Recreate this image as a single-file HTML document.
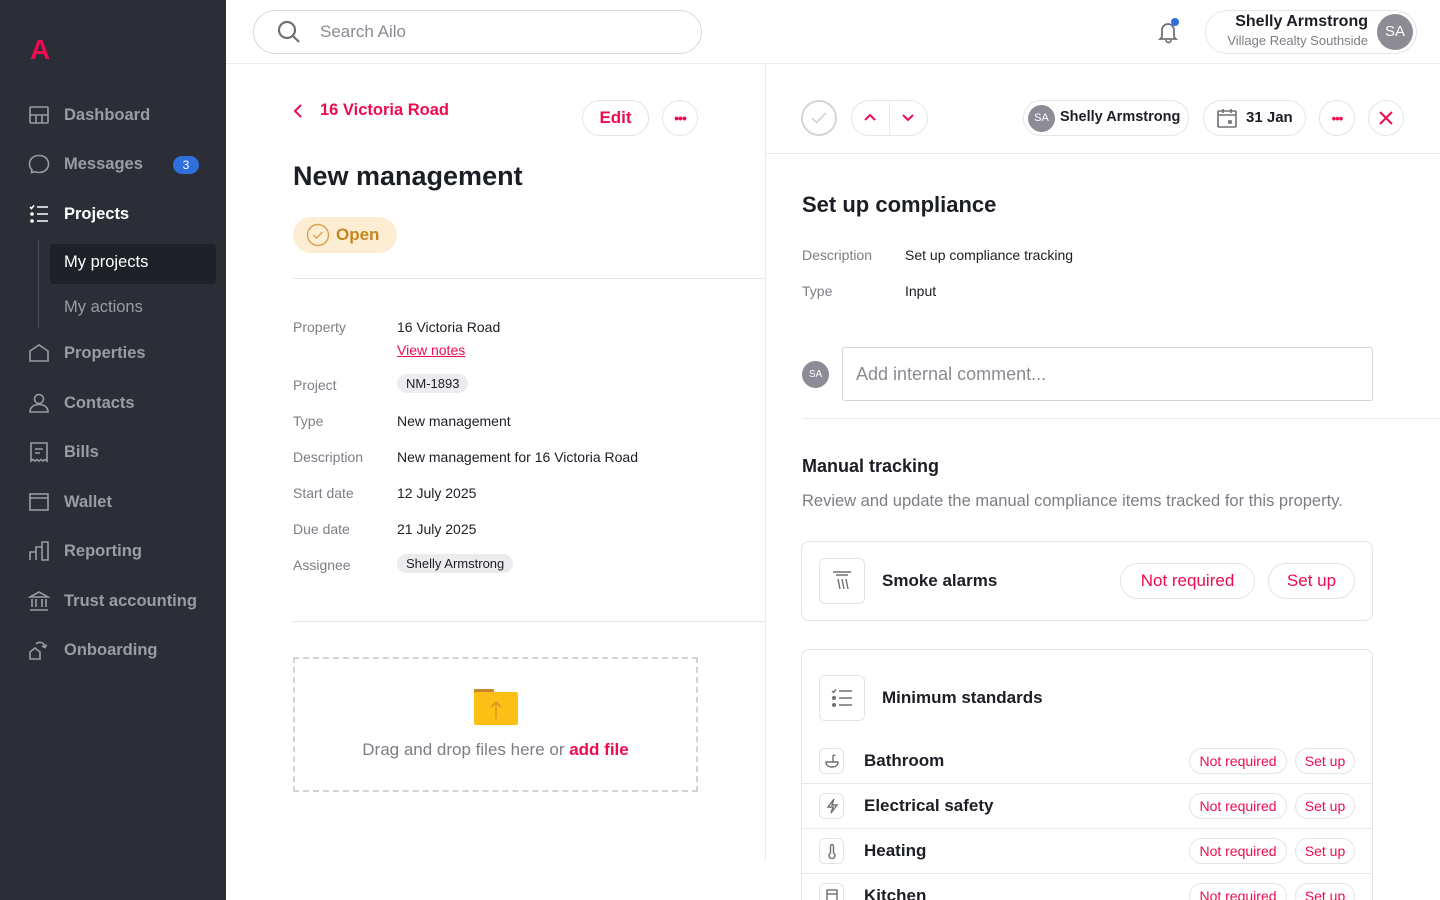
<!DOCTYPE html>
<html><head><meta charset="utf-8">
<style>
*{box-sizing:border-box;margin:0;padding:0}
html,body{width:1440px;height:900px;overflow:hidden}
body{background:#fff;font-family:"Liberation Sans",sans-serif;color:#1c1e26;position:relative}
.a{position:absolute}
.sb{left:0;top:0;width:226px;height:900px;background:#2b2e36}
.ni{position:absolute;left:28px;display:flex;align-items:center;color:#9a9ca3;font-size:16.5px;font-weight:bold}
.ni svg{width:22px;height:22px;margin-right:14px;fill:none;stroke:#9a9ca3;stroke-width:1.6}
.pill{position:absolute;border:1px solid #e6e6e8;border-radius:22px;background:#fff}
.lbl{position:absolute;left:293px;font-size:14px;color:#7c7e85}
.val{position:absolute;left:397px;font-size:14px;color:#1c1e26}
.red{color:#ee0b4f !important}
.tag{background:#ececee;border-radius:10px;padding:2px 9px;font-size:13px}
.btn{position:absolute;border:1px solid #e4e4e6;border-radius:20px;color:#ee0b4f;font-weight:bold;display:flex;align-items:center;justify-content:center;background:#fff}
.ico{position:absolute;border:1px solid #e4e4e6;border-radius:6px;display:flex;align-items:center;justify-content:center}
.ico svg{fill:none;stroke:#6e7077;stroke-width:1.4}
.row{position:absolute;left:1px;width:570px;height:45px;border-top:1px solid #e8e8ea}
</style></head><body>
<div class="a sb"></div>
<div class="a" style="left:30px;top:36px;font-size:28px;font-weight:bold;color:#ee0b4f;line-height:28px">A</div>

<div class="ni" style="top:104px"><svg viewBox="0 0 22 22"><rect x="2" y="3" width="18" height="16" rx="1"/><path d="M2 11h18M8 11v8M14 11v8"/></svg>Dashboard</div>
<div class="ni" style="top:153px"><svg viewBox="0 0 22 22"><path d="M4 17c-2-2-2.5-4-2.5-6 0-5 4-8.5 9.5-8.5s9.5 3.5 9.5 8.5-4 8.5-9.5 8.5c-1.5 0-3-.3-4-.8L3.5 19.5z"/></svg>Messages</div>
<div class="a" style="left:173px;top:156px;width:26px;height:18px;border-radius:9px;background:#2f6fdb;color:#fff;font-size:12px;text-align:center;line-height:18px">3</div>
<div class="ni" style="top:203px;color:#fff"><svg viewBox="0 0 22 22" style="stroke:#fff"><path d="M2 4l1.5 1.5L6 2.5M9 4h11M9 11h11M9 18h11"/><circle cx="4" cy="11" r="1" fill="#fff"/><circle cx="4" cy="18" r="1" fill="#fff"/></svg>Projects</div>
<div class="a" style="left:38px;top:240px;width:1px;height:88px;background:#4a4d55"></div>
<div class="a" style="left:50px;top:244px;width:166px;height:40px;background:#1f2128;border-radius:4px"></div>
<div class="ni" style="left:64px;top:253px;color:#fff;font-weight:normal">My projects</div>
<div class="ni" style="left:64px;top:298px;font-weight:normal">My actions</div>
<div class="ni" style="top:342px"><svg viewBox="0 0 22 22"><path d="M2 9l9-6 9 6v10H2z"/></svg>Properties</div>
<div class="ni" style="top:392px"><svg viewBox="0 0 22 22"><circle cx="11" cy="7" r="4.5"/><path d="M2 20c0-5 4-7.5 9-7.5s9 2.5 9 7.5z"/></svg>Contacts</div>
<div class="ni" style="top:441px"><svg viewBox="0 0 22 22"><path d="M3 2h16v18l-2-1.5-2 1.5-2-1.5-2 1.5-2-1.5-2 1.5-2-1.5-2 1.5zM7 8h8M7 12h5"/></svg>Bills</div>
<div class="ni" style="top:491px"><svg viewBox="0 0 22 22"><rect x="2" y="3" width="18" height="16"/><path d="M2 7h18"/></svg>Wallet</div>
<div class="ni" style="top:540px"><svg viewBox="0 0 22 22"><path d="M2 20V12h6v8M8 20V7h6v13M14 20V2h6v18z"/></svg>Reporting</div>
<div class="ni" style="top:590px"><svg viewBox="0 0 22 22"><path d="M2 7l9-5 9 5zM4 9v8M8 9v8M14 9v8M18 9v8M2 20h18"/></svg>Trust accounting</div>
<div class="ni" style="top:639px"><svg viewBox="0 0 22 22"><path d="M2 13l5-4 5 4v7H2zM8 5c3-3 8-2 9 3M14 7l3 1.5 1.5-3"/></svg>Onboarding</div>

<div class="a" style="left:226px;top:63px;width:1214px;height:1px;background:#ececee"></div>
<div class="pill" style="left:253px;top:10px;width:449px;height:44px;border-color:#d9d9dc"></div>
<svg class="a" style="left:276px;top:19px" width="26" height="26" viewBox="0 0 26 26" fill="none" stroke="#6e7077" stroke-width="2.2"><circle cx="11" cy="11" r="8"/><path d="M17 17l6 6"/></svg>
<div class="a" style="left:320px;top:22px;font-size:17px;color:#8a8c93">Search Ailo</div>
<svg class="a" style="left:1156px;top:18px" width="26" height="26" viewBox="0 0 26 26" fill="none" stroke="#6e7077" stroke-width="1.7"><path d="M6 19V12a6 6 0 0112 0v7l2 2H4zM10 22a2.5 2.5 0 005 0"/></svg>
<div class="a" style="left:1171px;top:18px;width:8px;height:8px;border-radius:4px;background:#2f6fdb"></div>
<div class="pill" style="left:1205px;top:10px;width:212px;height:44px"></div>
<div class="a" style="left:1212px;top:13px;width:156px;text-align:right;font-size:16px;font-weight:bold">Shelly Armstrong</div>
<div class="a" style="left:1212px;top:33px;width:156px;text-align:right;font-size:13px;color:#7c7e85">Village Realty Southside</div>
<div class="a" style="left:1377px;top:14px;width:36px;height:36px;border-radius:18px;background:#8d8c96;color:#fff;font-size:15px;text-align:center;line-height:36px">SA</div>

<div class="a" style="left:765px;top:64px;width:1px;height:796px;background:#ececee"></div>
<svg class="a" style="left:292px;top:103px" width="14" height="16" viewBox="0 0 14 16" fill="none" stroke="#ee0b4f" stroke-width="2"><path d="M9 2L3 8l6 6"/></svg>
<div class="a red" style="left:320px;top:101px;font-size:16.5px;font-weight:bold">16 Victoria Road</div>
<div class="btn" style="left:582px;top:100px;width:67px;height:36px;font-size:17px">Edit</div>
<div class="btn" style="left:662px;top:100px;width:36px;height:36px;font-size:14px;letter-spacing:-1px">•••</div>
<div class="a" style="left:293px;top:161px;font-size:27px;font-weight:bold">New management</div>
<div class="a" style="left:293px;top:217px;width:104px;height:36px;border-radius:18px;background:#fdedd3"></div>
<svg class="a" style="left:306px;top:223px" width="24" height="24" viewBox="0 0 24 24" fill="none" stroke="#d9a14e" stroke-width="1.4"><circle cx="12" cy="12" r="10.5"/><path d="M7.5 12l3 3 6-6"/></svg>
<div class="a" style="left:336px;top:225px;font-size:17px;font-weight:bold;color:#c68520">Open</div>
<div class="a" style="left:293px;top:278px;width:472px;height:1px;background:#e6e6e8"></div>

<div class="lbl" style="top:319px">Property</div><div class="val" style="top:319px">16 Victoria Road</div>
<div class="val red" style="top:342px;text-decoration:underline">View notes</div>
<div class="lbl" style="top:377px">Project</div><div class="val" style="top:375px"><span class="tag">NM-1893</span></div>
<div class="lbl" style="top:413px">Type</div><div class="val" style="top:413px">New management</div>
<div class="lbl" style="top:449px">Description</div><div class="val" style="top:449px">New management for 16 Victoria Road</div>
<div class="lbl" style="top:485px">Start date</div><div class="val" style="top:485px">12 July 2025</div>
<div class="lbl" style="top:521px">Due date</div><div class="val" style="top:521px">21 July 2025</div>
<div class="lbl" style="top:557px">Assignee</div><div class="val" style="top:555px"><span class="tag">Shelly Armstrong</span></div>
<div class="a" style="left:293px;top:621px;width:472px;height:1px;background:#e6e6e8"></div>
<div class="a" style="left:293px;top:657px;width:405px;height:135px;border:2px dashed #d4d4d7"></div>
<div class="a" style="left:474px;top:689px;width:44px;height:36px">
<div class="a" style="left:0;top:0;width:20px;height:6px;background:#c9862a;border-radius:1px"></div>
<div class="a" style="left:0;top:3px;width:44px;height:33px;background:#fbbf16;border-radius:2px"></div>
<svg class="a" style="left:14px;top:10px" width="16" height="22" viewBox="0 0 16 22" fill="none" stroke="#d99a20" stroke-width="1.6"><path d="M8 20V3M3 8l5-5 5 5"/></svg></div>
<div class="a" style="left:293px;top:740px;width:405px;text-align:center;font-size:17px;color:#7c7e85">Drag and drop files here or <b class="red">add file</b></div>

<div class="a" style="left:766px;top:153px;width:674px;height:1px;background:#ececee"></div>
<div class="a" style="left:801px;top:100px;width:36px;height:36px;border-radius:18px;border:2px solid #d4d4d7"></div>
<svg class="a" style="left:809px;top:108px" width="20" height="20" viewBox="0 0 20 20" fill="none" stroke="#d4d4d7" stroke-width="1.6"><path d="M3 10l4.5 4.5L17 5"/></svg>
<div class="pill" style="left:851px;top:100px;width:77px;height:36px;border-radius:18px"></div>
<div class="a" style="left:889px;top:101px;width:1px;height:34px;background:#ececee"></div>
<svg class="a" style="left:862px;top:110px" width="16" height="14" viewBox="0 0 16 14" fill="none" stroke="#ee0b4f" stroke-width="2"><path d="M3 10l5-5 5 5"/></svg>
<svg class="a" style="left:900px;top:110px" width="16" height="14" viewBox="0 0 16 14" fill="none" stroke="#ee0b4f" stroke-width="2"><path d="M3 5l5 5 5-5"/></svg>
<div class="pill" style="left:1023px;top:100px;width:166px;height:36px;border-radius:18px"></div>
<div class="a" style="left:1028px;top:105px;width:27px;height:27px;border-radius:14px;background:#8d8c96;color:#fff;font-size:11px;text-align:center;line-height:27px">SA</div>
<div class="a" style="left:1060px;top:109px;font-size:14.5px;font-weight:bold">Shelly Armstrong</div>
<div class="pill" style="left:1203px;top:100px;width:103px;height:36px;border-radius:18px"></div>
<svg class="a" style="left:1216px;top:107px" width="22" height="22" viewBox="0 0 22 22" fill="none" stroke="#6e7077" stroke-width="1.6"><rect x="2" y="4" width="18" height="16" rx="1"/><path d="M2 8h18M7 2v4M15 2v4"/><rect x="13" y="14" width="2" height="2" fill="#6e7077"/></svg>
<div class="a" style="left:1246px;top:109px;font-size:15px;font-weight:bold">31 Jan</div>
<div class="btn" style="left:1319px;top:100px;width:36px;height:36px;font-size:13px;letter-spacing:-1px">•••</div>
<div class="btn" style="left:1368px;top:100px;width:36px;height:36px"><svg width="16" height="16" viewBox="0 0 16 16" stroke="#ee0b4f" stroke-width="2"><path d="M2 2l12 12M14 2L2 14"/></svg></div>

<div class="a" style="left:802px;top:192px;font-size:22px;font-weight:bold">Set up compliance</div>
<div class="a" style="left:802px;top:247px;font-size:14px;color:#7c7e85">Description</div>
<div class="a" style="left:905px;top:247px;font-size:14px">Set up compliance tracking</div>
<div class="a" style="left:802px;top:283px;font-size:14px;color:#7c7e85">Type</div>
<div class="a" style="left:905px;top:283px;font-size:14px">Input</div>
<div class="a" style="left:802px;top:361px;width:27px;height:27px;border-radius:14px;background:#8d8c96;color:#fff;font-size:10px;text-align:center;line-height:27px">SA</div>
<div class="a" style="left:842px;top:347px;width:531px;height:54px;border:1px solid #d4d4d7;border-radius:3px"></div>
<div class="a" style="left:856px;top:364px;font-size:18px;color:#8a8c93">Add internal comment...</div>
<div class="a" style="left:802px;top:418px;width:638px;height:1px;background:#ececee"></div>
<div class="a" style="left:802px;top:456px;font-size:18px;font-weight:bold">Manual tracking</div>
<div class="a" style="left:802px;top:492px;font-size:16.5px;color:#7c7e85">Review and update the manual compliance items tracked for this property.</div>

<div class="a" style="left:801px;top:541px;width:572px;height:80px;border:1px solid #e4e4e6;border-radius:8px"></div>
<div class="ico" style="left:819px;top:558px;width:46px;height:46px"><svg width="24" height="24" viewBox="0 0 24 24"><path d="M3 3h18M6 6h12M8 10l2 10M12 10l2 10M16 10l2 10"/></svg></div>
<div class="a" style="left:882px;top:571px;font-size:17px;font-weight:bold">Smoke alarms</div>
<div class="btn" style="left:1120px;top:563px;width:135px;height:36px;font-size:17px;font-weight:normal">Not required</div>
<div class="btn" style="left:1268px;top:563px;width:87px;height:36px;font-size:17px;font-weight:normal">Set up</div>

<div class="a" style="left:801px;top:649px;width:572px;height:251px;overflow:hidden">
<div class="a" style="left:0;top:0;width:572px;height:300px;border:1px solid #e4e4e6;border-radius:8px"></div>
<div class="ico" style="left:18px;top:26px;width:46px;height:46px"><svg width="24" height="24" viewBox="0 0 24 24"><path d="M2 5l1.5 1.5L6 3.5M9 5h13M9 12h13M9 19h13"/><circle cx="4" cy="12" r="1.3" fill="#6e7077"/><circle cx="4" cy="19" r="1.3" fill="#6e7077"/></svg></div>
<div class="a" style="left:81px;top:39px;font-size:17px;font-weight:bold">Minimum standards</div>

<div class="row" style="top:134px"></div>
<div class="row" style="top:179px"></div>
<div class="row" style="top:224px"></div>

<div class="ico" style="left:18px;top:99px;width:25px;height:26px"><svg width="16" height="16" viewBox="0 0 16 16"><path d="M2 9h12c0 3-2 5-6 5S2 12 2 9zM9 9V3c0-1 2-1 2 0"/></svg></div>
<div class="a" style="left:63px;top:102px;font-size:17px;font-weight:bold">Bathroom</div>
<div class="btn" style="left:388px;top:99px;width:98px;height:26px;font-size:14px;font-weight:normal">Not required</div>
<div class="btn" style="left:494px;top:99px;width:60px;height:26px;font-size:14px;font-weight:normal">Set up</div>

<div class="ico" style="left:18px;top:144px;width:25px;height:26px"><svg width="16" height="16" viewBox="0 0 16 16"><path d="M10 1L4 9h5l-2 6 6-8H8z"/></svg></div>
<div class="a" style="left:63px;top:147px;font-size:17px;font-weight:bold">Electrical safety</div>
<div class="btn" style="left:388px;top:144px;width:98px;height:26px;font-size:14px;font-weight:normal">Not required</div>
<div class="btn" style="left:494px;top:144px;width:60px;height:26px;font-size:14px;font-weight:normal">Set up</div>

<div class="ico" style="left:18px;top:189px;width:25px;height:26px"><svg width="16" height="16" viewBox="0 0 16 16"><path d="M6.5 10V3a1.5 1.5 0 013 0v7a3 3 0 11-3 0z"/></svg></div>
<div class="a" style="left:63px;top:192px;font-size:17px;font-weight:bold">Heating</div>
<div class="btn" style="left:388px;top:189px;width:98px;height:26px;font-size:14px;font-weight:normal">Not required</div>
<div class="btn" style="left:494px;top:189px;width:60px;height:26px;font-size:14px;font-weight:normal">Set up</div>

<div class="ico" style="left:18px;top:234px;width:25px;height:26px"><svg width="16" height="16" viewBox="0 0 16 16"><rect x="3" y="2" width="10" height="12"/><path d="M3 6h10"/></svg></div>
<div class="a" style="left:63px;top:237px;font-size:17px;font-weight:bold">Kitchen</div>
<div class="btn" style="left:388px;top:234px;width:98px;height:26px;font-size:14px;font-weight:normal">Not required</div>
<div class="btn" style="left:494px;top:234px;width:60px;height:26px;font-size:14px;font-weight:normal">Set up</div>
</div>
</body></html>
